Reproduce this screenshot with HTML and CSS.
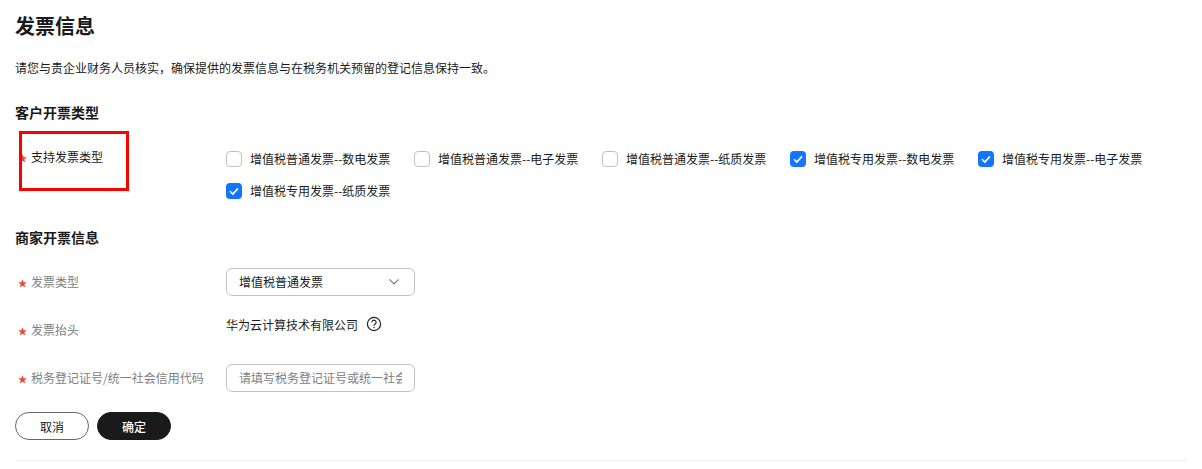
FILE: index.html
```html
<!DOCTYPE html>
<html lang="zh-CN">
<head>
<meta charset="utf-8">
<title>发票信息</title>
<link rel="stylesheet" href="styles.css">
</head>
<body>
<main class="page">
  <h1 class="title">发票信息</h1>
  <p class="desc">请您与贵企业财务人员核实，确保提供的发票信息与在税务机关预留的登记信息保持一致。</p>
  <h2 class="section first">客户开票类型</h2>
  <div class="row row-types">
    <div class="label dark"><svg class="star" width="9" height="9" viewBox="0 0 10 10"><path d="M5 .3l1.300 3.200 3.400.2-2.600 2.200.8 3.400L5 7.500 2.100 9.300l.8-3.400L.3 3.700l3.400-.2z"/></svg>支持发票类型</div>
    <div class="checks">
      <label class="check"><span class="box"></span>增值税普通发票--数电发票</label>
      <label class="check"><span class="box"></span>增值税普通发票--电子发票</label>
      <label class="check"><span class="box"></span>增值税普通发票--纸质发票</label>
      <label class="check"><span class="box on"><svg width="16" height="16" viewBox="0 0 16 16"><path d="M4 8.200l2.800 2.800L12 5.400" fill="none" stroke="#fff" stroke-width="1.600"/></svg></span>增值税专用发票--数电发票</label>
      <label class="check"><span class="box on"><svg width="16" height="16" viewBox="0 0 16 16"><path d="M4 8.200l2.800 2.800L12 5.400" fill="none" stroke="#fff" stroke-width="1.600"/></svg></span>增值税专用发票--电子发票</label>
      <label class="check"><span class="box on"><svg width="16" height="16" viewBox="0 0 16 16"><path d="M4 8.200l2.800 2.800L12 5.400" fill="none" stroke="#fff" stroke-width="1.600"/></svg></span>增值税专用发票--纸质发票</label>
    </div>
  </div>
  <h2 class="section second">商家开票信息</h2>
  <div class="row row-field">
    <div class="label"><svg class="star" width="9" height="9" viewBox="0 0 10 10"><path d="M5 .3l1.300 3.200 3.400.2-2.600 2.200.8 3.400L5 7.500 2.100 9.300l.8-3.400L.3 3.700l3.400-.2z"/></svg>发票类型</div>
    <div class="select">增值税普通发票<svg width="10" height="6" viewBox="0 0 10 6"><path d="M.4.4L5 5l4.600-4.600" fill="none" stroke="#777" stroke-width="1.100"/></svg></div>
  </div>
  <div class="row row-head">
    <div class="label low"><svg class="star" width="9" height="9" viewBox="0 0 10 10"><path d="M5 .3l1.300 3.200 3.400.2-2.600 2.200.8 3.400L5 7.500 2.100 9.300l.8-3.400L.3 3.700l3.400-.2z"/></svg>发票抬头</div>
    <div class="value">华为云计算技术有限公司<svg class="help" width="16" height="16" viewBox="0 0 16 16"><circle cx="8" cy="8" r="6.600" fill="none" stroke="#222" stroke-width="1.200"/><path d="M5.900 6.300a2.100 2.100 0 1 1 3.200 1.800c-.7.4-1.100.8-1.100 1.600" fill="none" stroke="#222" stroke-width="1.200"/><circle cx="8" cy="11.500" r=".75" fill="#222"/></svg></div>
  </div>
  <div class="row row-field">
    <div class="label"><svg class="star" width="9" height="9" viewBox="0 0 10 10"><path d="M5 .3l1.300 3.200 3.400.2-2.600 2.200.8 3.400L5 7.500 2.100 9.300l.8-3.400L.3 3.700l3.400-.2z"/></svg>税务登记证号/统一社会信用代码</div>
    <div class="input"><span class="placeholder">请填写税务登记证号或统一社会信用代码</span></div>
  </div>
  <div class="actions">
    <button class="btn" type="button">取消</button>
    <button class="btn primary" type="button">确定</button>
  </div>
  <hr class="divider">
</main>
<div class="highlight"></div>
</body>
</html>
```
FILE: styles.css
```css
* { box-sizing: border-box; }
html, body { margin: 0; padding: 0; background: #fff; }
body {
  width: 1202px;
  height: 469px;
  overflow: hidden;
  position: relative;
  font-family: "Noto Sans CJK SC", "Liberation Sans", sans-serif;
  font-size: 12px;
  color: #1a1a1a;
}
.page { padding: 12px 15px 0; }
.title { margin: 0; font-size: 20px; line-height: 28px; font-weight: 700; color: #1a1a1a; }
.desc { margin: 20px 0 0; line-height: 16px; }
.section { margin: 0; font-size: 14px; line-height: 20px; font-weight: 700; }
.section.first { margin-top: 26px; }
.section.second { margin-top: 28px; }
.row { display: flex; }
.row-types { margin-top: 17px; }
.row-field { height: 28px; align-items: center; }
.section + .row-field { margin-top: 21px; }
.row-head { height: 68px; align-items: flex-start; }
.label { width: 211px; flex: none; padding-left: 3px; color: #808080; line-height: 16px; display: flex; align-items: center; gap: 4px; }
.label.dark { color: #1a1a1a; height: 16px; margin-top: 10px; }
.label.low { margin-top: 26px; }
.star { width: 9px; height: 9px; flex: none; fill: #f0483e; position: relative; top: 1px; }
.checks { display: flex; flex-wrap: wrap; width: 950px; margin-top: 12px; row-gap: 16px; }
.check { width: 188px; height: 16px; display: flex; align-items: center; gap: 8px; line-height: 16px; white-space: nowrap; }
.box { width: 16px; height: 16px; flex: none; border: 1px solid #c2c2c2; border-radius: 4px; background: #fff; }
.box.on { border: 0; background: #1476ff; }
.box svg { display: block; }
.select, .input {
  width: 189px;
  height: 28px;
  border: 1px solid #c2c2c2;
  border-radius: 6px;
  padding: 0 12px;
  display: flex;
  align-items: center;
  justify-content: space-between;
  line-height: 26px;
  white-space: nowrap;
}
.select { padding-right: 15px; }
.select svg { flex: none; }
.input { overflow: hidden; }
.placeholder { display: block; width: 163px; overflow: hidden; color: #808080; }
.value { display: flex; align-items: center; height: 16px; margin-top: 20px; white-space: nowrap; gap: 8px; }
.help { flex: none; }
.actions { display: flex; gap: 8px; margin-top: 20px; }
.btn {
  width: 74px;
  height: 28px;
  border: 1px solid #666;
  border-radius: 14px;
  background: #fff;
  color: #1a1a1a;
  font: inherit;
  padding: 0;
}
.btn.primary { background: #1a1a1a; border-color: #1a1a1a; color: #fff; font-weight: 500; }
.divider { margin: 20px 0 0; border: 0; border-top: 1px solid #eee; width: 1172px; }
.highlight { position: absolute; left: 19px; top: 131px; width: 110px; height: 60px; border: 3px solid #f00; }
```
